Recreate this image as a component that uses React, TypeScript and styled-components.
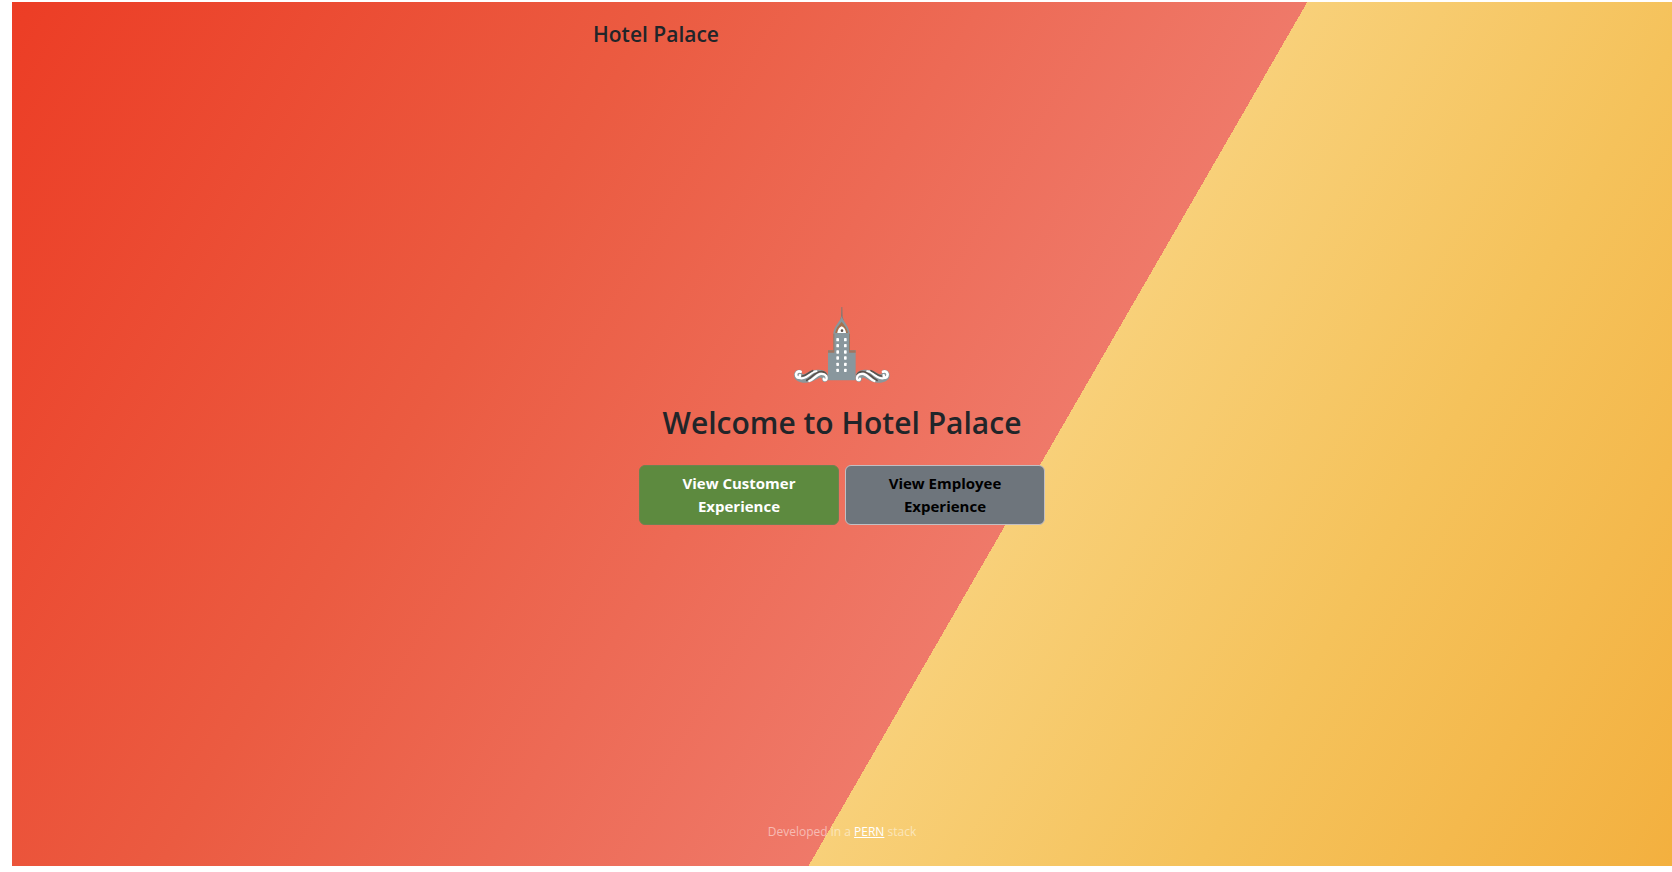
import React from "react";
import styled, { createGlobalStyle } from "styled-components";

const GlobalStyle = createGlobalStyle`
  * { box-sizing: border-box; }
  body {
    margin: 0;
    background: #fff;
    color: #212529;
    font-family: "Segoe UI", "Open Sans", "Noto Sans", sans-serif;
    font-size: 16px;
    line-height: 24px;
  }
`;

const Page = styled.div`
  min-height: 100vh;
  padding: 2px 0 6px 12px;
  display: flex;
`;

const Cover = styled.div`
  flex: 1;
  display: flex;
  justify-content: center;
  background: linear-gradient(
    120deg,
    #ec3d25 0%,
    #eb5b41 30%,
    #ef7969 60%,
    #f8d079 60%,
    #f5c25b 78%,
    #f3b03f 100%
  );
`;

const Column = styled.div`
  width: 100%;
  max-width: 530px;
  padding: 16px;
  display: flex;
  flex-direction: column;
  justify-content: space-between;
`;

const Brand = styled.h3`
  margin: 0;
  font-size: 21px;
  line-height: 32px;
  font-weight: 600;
`;

const Main = styled.main`
  padding-bottom: 46px;
  display: flex;
  flex-direction: column;
  align-items: center;
  text-align: center;
`;

const Logo = styled.svg`
  display: block;
  width: 124px;
  height: 90px;
`;

const Title = styled.h1`
  margin: 12px 0 22px;
  font-size: 30px;
  line-height: 40px;
  font-weight: 600;
`;

const Actions = styled.div`
  display: flex;
  gap: 6px;
`;

const ActionButton = styled.button<{ $kind: "customer" | "employee" }>`
  width: 200px;
  padding: 6px 32px;
  border: 1px solid ${(p) => (p.$kind === "customer" ? "#6c8350" : "#c3bfc3")};
  border-radius: 6px;
  background: ${(p) => (p.$kind === "customer" ? "#5d8a3f" : "#6e757c")};
  color: ${(p) => (p.$kind === "customer" ? "#fff" : "#000")};
  font-family: inherit;
  font-size: 15px;
  line-height: 23px;
  font-weight: 700;
  cursor: pointer;
`;

const Footer = styled.footer`
  padding-bottom: 8px;
  text-align: center;
  font-size: 12px;
  line-height: 20px;
  color: rgba(255, 255, 255, 0.5);

  a { color: #fff; }
`;

const windowRows = [116, 134, 153, 171, 190, 208];

function Scroll() {
  return (
    <g>
      <path
        d="M63 207C49 204 41 214 42 225C44 240 62 247 80 245C97 243 107 236 117 231C122 228 126 231 126 236C128 244 138 246 143 238C149 225 142 210 124 207C104 204 92 209 80 216C73 221 67 221 65 216Z"
        fill="#8b979b"
      />
      <g fill="none" strokeLinecap="round">
        <path d="M62 212C52 208 46 217 49 225C52 233 61 229 60 223" stroke="#fff" strokeWidth="8" />
        <path d="M58 231C72 236 84 226 95 216C99 212 104 211 109 211" stroke="#fff" strokeWidth="7" />
        <path d="M66 225C78 226 85 214 98 209" stroke="#5b514b" strokeWidth="5" />
        <path d="M80 238C94 232 100 218 116 213C128 210 137 215 140 222" stroke="#5b514b" strokeWidth="5" />
        <path d="M88 240C102 234 108 222 120 219C130 217 140 222 140 230C140 239 131 240 131 233" stroke="#fff" strokeWidth="7" />
      </g>
    </g>
  );
}

function HotelLogo() {
  return (
    <Logo viewBox="0 0 372 270" role="img" aria-label="Hotel Palace logo">
      <path d="M184 18H187L188 47L191 58H180L183 47Z" fill="#8a7770" />
      <path d="M185 45C188 60 206 73 209 96V148H227V238H144V148H160V96C163 73 182 60 185 45Z" fill="#89979d" />
      <path d="M166 96C168 78 180 70 185 62C190 70 201 78 204 96H198C195 82 175 82 172 96Z" fill="#a5714f" />
      <path d="M172 96C174 83 179 79 185 76C191 79 196 83 198 96Z" fill="#fff" />
      <circle cx="186" cy="89" r="4" fill="#5b514b" />
      <path d="M144 148H160V98H163V155H144ZM227 148H210V98H207V155H227Z" fill="#a07560" />
      {windowRows.map((y) => (
        <g key={y} fill="#fff">
          <rect x="169" y={y - 5} width="8" height="10" rx="2" />
          <rect x="192" y={y - 5} width="8" height="10" rx="2" />
        </g>
      ))}
      <Scroll />
      <g transform="translate(371 0) scale(-1 1)">
        <Scroll />
      </g>
    </Logo>
  );
}

export default function App() {
  return (
    <>
      <GlobalStyle />
      <Page>
        <Cover>
          <Column>
            <header>
              <Brand>Hotel Palace</Brand>
            </header>
            <Main>
              <HotelLogo />
              <Title>Welcome to Hotel Palace</Title>
              <Actions>
                <ActionButton type="button" $kind="customer">
                  View Customer Experience
                </ActionButton>
                <ActionButton type="button" $kind="employee">
                  View Employee Experience
                </ActionButton>
              </Actions>
            </Main>
            <Footer>
              Developed in a <a href="#pern">PERN</a> stack
            </Footer>
          </Column>
        </Cover>
      </Page>
    </>
  );
}
